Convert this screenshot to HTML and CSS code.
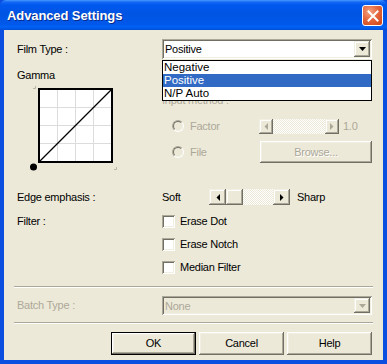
FILE: index.html
```html
<!DOCTYPE html>
<html>
<head>
<meta charset="utf-8">
<link rel="stylesheet" href="styles.css">
</head>
<body>
<div class="window">
  <div class="titlebar">
    <span class="title">Advanced Settings</span>
    <span class="close"><svg width="12" height="12" viewBox="0 0 12 12"><path d="M1.5 1.5 L10.5 10.5 M10.5 1.5 L1.5 10.5" stroke="#fff" stroke-width="2" stroke-linecap="square"/></svg></span>
  </div>
  <div class="client">
    <div class="row film">
      <div class="label">Film Type :</div>
      <div class="combo-wrap">
        <div class="combo">
          <span class="value">Positive</span>
          <span class="drop raised"><svg width="7" height="4"><polygon points="0,0 7,0 3.5,4" fill="#000"/></svg></span>
        </div>
        <ul class="popup">
          <li>Negative</li>
          <li class="sel">Positive</li>
          <li>N/P Auto</li>
        </ul>
      </div>
    </div>

    <div class="gamma-section">
      <div class="gamma-col">
        <div class="label">Gamma</div>
        <svg class="curve" width="90" height="90" viewBox="0 0 90 90">
          <rect x="9" y="6" width="73" height="73" fill="#fff"/>
          <g stroke="#dcdcdc" stroke-width="1">
            <path d="M27.5 7 V79 M45.5 7 V79 M63.5 7 V79 M9 24.5 H82 M9 42.5 H82 M9 60.5 H82"/>
          </g>
          <path d="M9 79 L82 6" stroke="#000" stroke-width="1.2"/>
          <rect x="9" y="6" width="73" height="73" fill="none" stroke="#000" stroke-width="2"/>
          <circle cx="3.5" cy="84" r="3.5" fill="#000"/>
          <path d="M3 5.5 H5.5 V3" fill="none" stroke="#b8b6aa" stroke-width="1"/>
          <path d="M84 86.5 H86.5 V84" fill="none" stroke="#b8b6aa" stroke-width="1"/>
        </svg>
      </div>
      <div class="input-col">
        <div class="label dis">Input method :</div>
        <div class="opt-row factor">
          <div class="opt"><span class="radio"><span></span></span><span class="dis">Factor</span></div>
          <div class="sb sb-small">
            <span class="sb-btn"><svg width="4" height="7"><polygon points="4,0 4,7 0.5,3.5" fill="#aca899"/></svg></span>
            <span class="sb-track"></span>
            <span class="sb-btn"><svg width="4" height="7"><polygon points="0,0 0,7 3.5,3.5" fill="#aca899"/></svg></span>
          </div>
          <span class="dis val">1.0</span>
        </div>
        <div class="opt-row file">
          <div class="opt"><span class="radio"><span></span></span><span class="dis">File</span></div>
          <div class="btn browse dis">Browse...</div>
        </div>
      </div>
    </div>

    <div class="row edge">
      <div class="label">Edge emphasis :</div>
      <div class="soft">Soft</div>
      <div class="sb sb-edge">
        <span class="sb-btn"><svg width="4" height="7"><polygon points="4,0 4,7 0.5,3.5" fill="#000"/></svg></span>
        <span class="sb-thumb"></span>
        <span class="sb-track"></span>
        <span class="sb-btn"><svg width="4" height="7"><polygon points="0,0 0,7 3.5,3.5" fill="#000"/></svg></span>
      </div>
      <div class="sharp">Sharp</div>
    </div>

    <div class="row filter">
      <div class="label">Filter :</div>
      <div class="checks">
        <div class="check-row"><span class="check"></span><span>Erase Dot</span></div>
        <div class="check-row"><span class="check"></span><span>Erase Notch</span></div>
        <div class="check-row"><span class="check"></span><span>Median Filter</span></div>
      </div>
    </div>

    <div class="sep"></div>

    <div class="row batch">
      <div class="label dis">Batch Type :</div>
      <div class="combo disabled">
        <span class="value dis">None</span>
        <span class="drop raised"><svg width="7" height="4"><polygon points="0,0 7,0 3.5,4" fill="#aca899"/></svg></span>
      </div>
    </div>

    <div class="sep sep2"></div>

    <div class="buttons">
      <div class="btn default"><span>OK</span></div>
      <div class="btn">Cancel</div>
      <div class="btn">Help</div>
    </div>
  </div>
</div>
</body>
</html>
```
FILE: styles.css
```css
* { box-sizing: border-box; }
html, body { margin: 0; padding: 0; }
body {
  width: 387px;
  height: 364px;
  overflow: hidden;
  font-family: "Liberation Sans", Arial, sans-serif;
  font-size: 11px;
  line-height: 13px;
  letter-spacing: -0.25px;
  color: #000;
  background: #fff;
}
.window {
  width: 387px;
  height: 364px;
  display: flex;
  flex-direction: column;
  background: #0a4fdf;
}
.titlebar {
  height: 30px;
  flex: none;
  display: flex;
  align-items: center;
  justify-content: space-between;
  padding: 0 4px 0 7px;
  background: linear-gradient(#4a9bff 0, #1468f5 2px, #0058ee 5px, #0054e3 45%, #0058ea 80%, #0062f6 90%, #004fd8 100%);
  border-radius: 6px 6px 0 0;
}
.title {
  color: #fff;
  font-weight: bold;
  font-size: 13px;
  line-height: 16px;
  letter-spacing: -0.1px;
  text-shadow: 1px 1px 0 #0a2a8a;
  margin-top: 1px;
}
.close {
  width: 21px;
  height: 21px;
  margin-top: 1px;
  display: flex;
  align-items: center;
  justify-content: center;
  border: 1px solid #fff;
  border-radius: 3px;
  background: radial-gradient(circle at 35% 30%, #f4a283 0, #e5683f 45%, #cc4215 100%);
}
.client {
  flex: 1;
  margin: 0 4px 4px 4px;
  background: #ece9d8;
  padding: 0 11px 0 13px;
  display: flex;
  flex-direction: column;
}
.row { display: flex; align-items: center; }
.label { width: 145px; flex: none; }
.dis { color: #aca899; }

/* film type */
.film { margin-top: 9px; height: 20px; }
.combo-wrap { position: relative; flex: 1; height: 20px; }
.combo {
  flex: 1;
  height: 20px;
  display: flex;
  align-items: center;
  justify-content: space-between;
  background: #fff;
  padding: 2px 2px 2px 3px;
  box-shadow: inset 1px 1px #aca899, inset -1px -1px #fff, inset 2px 2px #716f64, inset -2px -2px #f1efe2;
}
.combo.disabled { background: #ece9d8; }
.value { padding-top: 1px; }
.drop {
  width: 16px;
  height: 16px;
  display: flex;
  align-items: center;
  justify-content: center;
  background: #ece9d8;
}
.raised {
  box-shadow: inset -1px -1px #716f64, inset 1px 1px #f1efe2, inset -2px -2px #aca899, inset 2px 2px #fff;
}
.popup {
  position: absolute;
  left: 0;
  right: 0;
  top: 21px;
  margin: 0;
  padding: 0;
  list-style: none;
  background: #fff;
  border: 1px solid #000;
  font-size: 11.5px;
  letter-spacing: 0;
}
.popup li { height: 13px; line-height: 13px; padding-left: 1px; }
.popup li.sel { background: #316ac5; color: #fff; }

/* gamma */
.gamma-section { display: flex; height: 130px; }
.gamma-col { width: 145px; flex: none; display: flex; flex-direction: column; }
.gamma-col .label { margin-top: 10px; }
.curve { display: block; margin: 1px 0 0 13px; }
.input-col { flex: 1; display: flex; flex-direction: column; }
.input-col .label { margin-top: 35px; }
.opt-row { display: flex; align-items: center; }
.factor { margin-top: 11px; height: 16px; }
.file { margin-top: 7px; height: 22px; }
.opt { width: 97px; flex: none; display: flex; align-items: center; gap: 6px; padding-left: 10px; }
.radio {
  width: 12px;
  height: 12px;
  border-radius: 50%;
  border: 1px solid;
  border-color: #aca899 #fff #fff #aca899;
  display: flex;
}
.radio span {
  flex: 1;
  border-radius: 50%;
  border: 1px solid;
  border-color: #716f64 #f1efe2 #f1efe2 #716f64;
  background: #ece9d8;
}
.val { margin-left: 4px; }

/* scrollbars */
.sb { display: flex; height: 16px; flex: none; }
.sb-small { width: 80px; height: 15px; }
.sb-edge { width: 81px; }
.sb-btn, .sb-thumb {
  width: 17px;
  flex: none;
  display: flex;
  align-items: center;
  justify-content: center;
  background: #ece9d8;
  box-shadow: inset -1px -1px #716f64, inset 1px 1px #f1efe2, inset -2px -2px #aca899, inset 2px 2px #fff;
}
.sb-small .sb-btn { width: 14px; }
.sb-track {
  flex: 1;
  background: repeating-conic-gradient(#fff 0 25%, #ece9d8 0 50%) 0 0 / 2px 2px;
}

/* buttons */
.btn {
  display: flex;
  align-items: center;
  justify-content: center;
  background: #ece9d8;
  box-shadow: inset -1px -1px #716f64, inset 1px 1px #fff, inset -2px -2px #aca899, inset 2px 2px #f1efe2;
}
.browse { width: 112px; height: 22px; margin-left: 1px; text-shadow: 1px 1px 0 #fff; }

/* edge */
.edge { height: 16px; }
.soft { width: 47px; flex: none; }
.sharp { margin-left: 7px; }

/* filter */
.filter { align-items: flex-start; margin-top: 5px; }
.filter .label { height: 23px; line-height: 23px; }
.checks { display: flex; flex-direction: column; }
.check-row { height: 23px; display: flex; align-items: center; gap: 5px; }
.check {
  width: 13px;
  height: 13px;
  background: #fff;
  box-shadow: inset 1px 1px #aca899, inset -1px -1px #fff, inset 2px 2px #716f64, inset -2px -2px #f1efe2;
}

/* separators */
.sep {
  height: 2px;
  margin: 7px -1px 0 -3px;
  border-top: 1px solid #aca899;
  border-bottom: 1px solid #fff;
}
.batch { margin-top: 8px; height: 19px; }
.batch .combo { height: 19px; }
.batch .drop { height: 15px; }

/* dialog buttons */
.buttons { display: flex; justify-content: flex-end; gap: 3px; margin-top: 8px; }
.buttons .btn { width: 85px; height: 23px; }
.buttons .default {
  box-shadow: inset 0 0 0 1px #000, inset -2px -2px #716f64, inset 2px 2px #fff, inset -3px -3px #aca899, inset 3px 3px #f1efe2;
}
```
